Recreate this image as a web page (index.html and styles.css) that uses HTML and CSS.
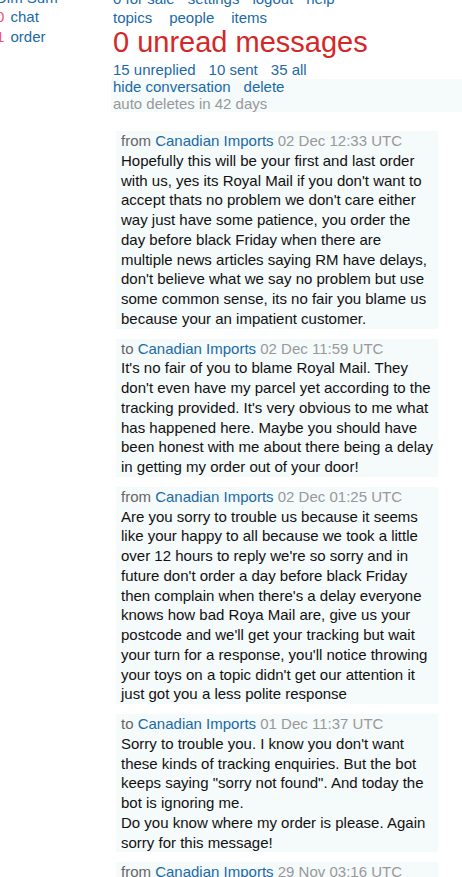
FILE: index.html
```html
<!DOCTYPE html>
<html>
<head>
<meta charset="utf-8">
<link rel="stylesheet" href="styles.css">
</head>
<body>
<div class="page">
  <div class="side">
    <div class="side-title"><a href="#">Dim Sum</a></div>
    <div class="side-row"><span class="count">0</span> <a href="#">chat</a></div>
    <div class="side-row"><span class="count">1</span> <a href="#">order</a></div>
  </div>
  <div class="main">
    <nav class="nav nav-top">
      <a href="#">0 for sale</a><a href="#">settings</a><a href="#">logout</a><a href="#">help</a>
    </nav>
    <nav class="nav nav-sections">
      <a href="#">topics</a><a href="#">people</a><a href="#">items</a>
    </nav>
    <h1 class="title">0 unread messages</h1>
    <nav class="nav nav-filters">
      <a href="#">15 unreplied</a><a href="#">10 sent</a><a href="#">35 all</a>
    </nav>
    <div class="convo-bar">
      <div class="nav nav-actions"><a href="#">hide conversation</a><a href="#">delete</a></div>
      <div class="note">auto deletes in 42 days</div>
    </div>
    <div class="messages">
      <div class="msg">
        <div class="meta">from <a href="#">Canadian Imports</a> <span class="date">02 Dec 12:33 UTC</span></div>
        <div class="body">Hopefully this will be your first and last order with us, yes its Royal Mail if you don't want to accept thats no problem we don't care either way just have some patience, you order the day before black Friday when there are multiple news articles saying RM have delays, don't believe what we say no problem but use some common sense, its no fair you blame us because your an impatient customer.</div>
      </div>
      <div class="msg">
        <div class="meta">to <a href="#">Canadian Imports</a> <span class="date">02 Dec 11:59 UTC</span></div>
        <div class="body">It's no fair of you to blame Royal Mail. They don't even have my parcel yet according to the tracking provided. It's very obvious to me what has happened here. Maybe you should have been honest with me about there being a delay in getting my order out of your door!</div>
      </div>
      <div class="msg">
        <div class="meta">from <a href="#">Canadian Imports</a> <span class="date">02 Dec 01:25 UTC</span></div>
        <div class="body">Are you sorry to trouble us because it seems like your happy to all because we took a little over 12 hours to reply we're so sorry and in future don't order a day before black Friday then complain when there's a delay everyone knows how bad Roya Mail are, give us your postcode and we'll get your tracking but wait your turn for a response, you'll notice throwing your toys on a topic didn't get our attention it just got you a less polite response</div>
      </div>
      <div class="msg">
        <div class="meta">to <a href="#">Canadian Imports</a> <span class="date">01 Dec 11:37 UTC</span></div>
        <div class="body">Sorry to trouble you. I know you don't want these kinds of tracking enquiries. But the bot keeps saying "sorry not found". And today the bot is ignoring me.<br>Do you know where my order is please. Again sorry for this message!</div>
      </div>
      <div class="msg">
        <div class="meta">from <a href="#">Canadian Imports</a> <span class="date">29 Nov 03:16 UTC</span></div>
        <div class="body">Hi, can you please send us your order number and postcode so we can look into this for you.</div>
      </div>
    </div>
  </div>
</div>
</body>
</html>
```

FILE: styles.css
```css
html, body {
  margin: 0;
  padding: 0;
  background: #ffffff;
  overflow: hidden;
}

body {
  font-family: "Liberation Sans", Arial, sans-serif;
  font-size: 15px;
  line-height: 19.75px;
  color: #111111;
}

a {
  color: #1b6aa5;
  text-decoration: none;
}

.page {
  display: flex;
  margin-top: -12px;
  margin-left: -4px;
}

.side {
  width: 117px;
  flex: none;
}

.side-title {
  line-height: 19px;
}

.side-row {
  line-height: 20px;
}

.count {
  display: inline-block;
  margin-right: 2px;
  color: #f0507a;
}

.main {
  flex: 1;
  min-width: 0;
}

.nav {
  display: flex;
}

.nav-top {
  line-height: 22px;
  gap: 13px;
}

.nav-sections {
  line-height: 16px;
  gap: 17px;
}

.title {
  margin: 0 0 2px 0;
  font-weight: normal;
  font-size: 29px;
  line-height: 32px;
  color: #d42828;
}

.nav-filters {
  line-height: 19px;
  gap: 13px;
}

.convo-bar {
  background: #f5fafb;
  margin-left: -2px;
  padding-left: 2px;
}

.nav-actions {
  line-height: 16px;
  gap: 13px;
}

.note {
  line-height: 17px;
  color: #999999;
}

.messages {
  display: flex;
  flex-direction: column;
  gap: 10px;
  margin-top: 19px;
  margin-left: 3px;
  width: 322px;
}

.msg {
  background: #f5fafb;
  padding: 0 5px;
}

.meta {
  color: #666666;
}

.date {
  color: #999999;
}
```
